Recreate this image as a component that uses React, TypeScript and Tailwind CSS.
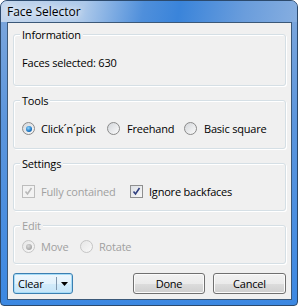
import React from 'react';

const font = { fontFamily: '"Open Sans", "Liberation Sans", sans-serif' };

function Radio({ checked = false, disabled = false }: { checked?: boolean; disabled?: boolean }) {
  return (
    <span
      className={
        disabled
          ? 'flex h-[13px] w-[13px] shrink-0 items-center justify-center rounded-full border border-[#c5c5c5] bg-[linear-gradient(135deg,#e6e6e6,#f8f8f8)]'
          : 'flex h-[13px] w-[13px] shrink-0 items-center justify-center rounded-full border border-[#8a8a8a] bg-[linear-gradient(135deg,#d3d6da,#fbfbfb)]'
      }
    >
      {checked && (
        <span
          className={
            disabled
              ? 'h-[6px] w-[6px] rounded-full bg-[radial-gradient(circle_at_40%_35%,#d8d8d8,#a6a6a6_70%)]'
              : 'h-[6px] w-[6px] rounded-full bg-[radial-gradient(circle_at_40%_35%,#8fd6ff,#1c75c2_60%,#0c4f8c)]'
          }
        />
      )}
    </span>
  );
}

function Check({ disabled = false }: { disabled?: boolean }) {
  return (
    <span
      className={
        disabled
          ? 'flex h-[13px] w-[13px] shrink-0 items-center justify-center border border-[#bdbdbd] bg-[#f3f3f3]'
          : 'flex h-[13px] w-[13px] shrink-0 items-center justify-center border border-[#8e8f8f] bg-[linear-gradient(135deg,#dcdfe4,#f8f8f8)]'
      }
    >
      <svg width="9" height="9" viewBox="0 0 9 9">
        <path
          d="M1.5 4.5 L3.5 7 L7.5 1"
          fill="none"
          stroke={disabled ? '#b8b8b8' : '#2f3f7f'}
          strokeWidth="1.6"
        />
      </svg>
    </span>
  );
}

function Group({
  label,
  disabled = false,
  className,
  children,
}: {
  label: string;
  disabled?: boolean;
  className: string;
  children: React.ReactNode;
}) {
  return (
    <div
      className={
        'relative rounded-[3px] border border-[#d5dfe5] shadow-[inset_1px_1px_0_#ffffff,1px_1px_0_#ffffff] ' +
        className
      }
    >
      <span
        className={
          disabled
            ? 'absolute -top-[8px] left-[6px] bg-[#f0f0f0] px-[2px] text-[11px] leading-[15px] text-[#a0a0a0]'
            : 'absolute -top-[8px] left-[6px] bg-[#f0f0f0] px-[2px] text-[11px] leading-[15px] text-black'
        }
      >
        {label}
      </span>
      {children}
    </div>
  );
}

export default function App() {
  return (
    <div
      style={font}
      className="flex h-[306px] w-[298px] flex-col rounded-t-[7px] rounded-b-[4px] border border-[#2c4a6d] bg-[linear-gradient(180deg,#7fa8dc_0%,#5b95dc_40%,#3c88e2_100%)]"
    >
      <div className="flex h-[21px] items-center rounded-t-[6px] bg-[linear-gradient(100deg,#c4d7ed_0%,#adc9ea_28%,#4f8fdb_48%,#3a84da_60%,#6a9ddc_82%,#86aee0_100%)] pl-[6px]">
        <span className="text-[12px] leading-[15px] text-black [text-shadow:0_0_6px_#ffffff,0_0_10px_#ffffff]">
          Face Selector
        </span>
      </div>
      <div className="ml-[6px] mr-[5px] flex h-[278px] flex-col border border-[#3b5878] bg-[#f0f0f0] px-[5px] pb-[5px] pt-[11px] text-[11px] leading-[13px] tracking-[-0.2px] text-black">
        <Group label="Information" className="h-[52px] pl-[8px] pt-[21px]">
          <span>Faces selected: 630</span>
        </Group>

        <Group label="Tools" className="mt-[14px] h-[49px] pl-[8px] pt-[21px]">
          <div className="flex items-center">
            <label className="flex w-[85px] items-center gap-[6px]">
              <Radio checked />
              <span>Click´n´pick</span>
            </label>
            <label className="flex w-[77px] items-center gap-[7px]">
              <Radio />
              <span>Freehand</span>
            </label>
            <label className="flex items-center gap-[7px]">
              <Radio />
              <span>Basic square</span>
            </label>
          </div>
        </Group>

        <Group label="Settings" className="mt-[14px] h-[48px] pl-[8px] pt-[21px]">
          <div className="flex items-center">
            <label className="flex w-[108px] items-center gap-[6px] text-[#a0a0a0]">
              <Check disabled />
              <span>Fully contained</span>
            </label>
            <label className="flex items-center gap-[6px]">
              <Check />
              <span>Ignore backfaces</span>
            </label>
          </div>
        </Group>

        <Group label="Edit" disabled className="mt-[14px] h-[39px] pl-[8px] pt-[14px]">
          <div className="flex items-center text-[#a0a0a0]">
            <label className="flex w-[58px] items-center gap-[6px]">
              <Radio checked disabled />
              <span>Move</span>
            </label>
            <label className="flex items-center gap-[6px]">
              <Radio disabled />
              <span>Rotate</span>
            </label>
          </div>
        </Group>

        <div className="mt-[9px] flex h-[21px] items-stretch">
          <div className="flex w-[60px] items-center rounded-[3px] border border-[#3c7fb1] bg-[linear-gradient(180deg,#eef7fd_0%,#e2f2fc_50%,#d2ebfa_51%,#c6e5f8_100%)] shadow-[inset_0_0_0_1px_#a6dcf7]">
            <span className="pl-[4px]">Clear</span>
            <span className="ml-auto h-[13px] w-px bg-[#7f97ad]" />
            <span className="flex w-[15px] items-center justify-center">
              <svg width="7" height="4" viewBox="0 0 7 4">
                <path d="M0 0 H7 L3.5 4 Z" fill="#000" />
              </svg>
            </span>
          </div>
          <div className="flex-1" />
          <button className="w-[72px] rounded-[3px] border border-[#707070] bg-[linear-gradient(180deg,#f2f2f2_0%,#ebebeb_50%,#dddddd_51%,#cfcfcf_100%)] text-[11px] leading-[13px] tracking-[-0.2px] shadow-[inset_0_0_0_1px_#fbfbfb]">
            Done
          </button>
          <button className="ml-[8px] w-[73px] rounded-[3px] border border-[#707070] bg-[linear-gradient(180deg,#f2f2f2_0%,#ebebeb_50%,#dddddd_51%,#cfcfcf_100%)] text-[11px] leading-[13px] tracking-[-0.2px] shadow-[inset_0_0_0_1px_#fbfbfb]">
            Cancel
          </button>
        </div>
      </div>
    </div>
  );
}
